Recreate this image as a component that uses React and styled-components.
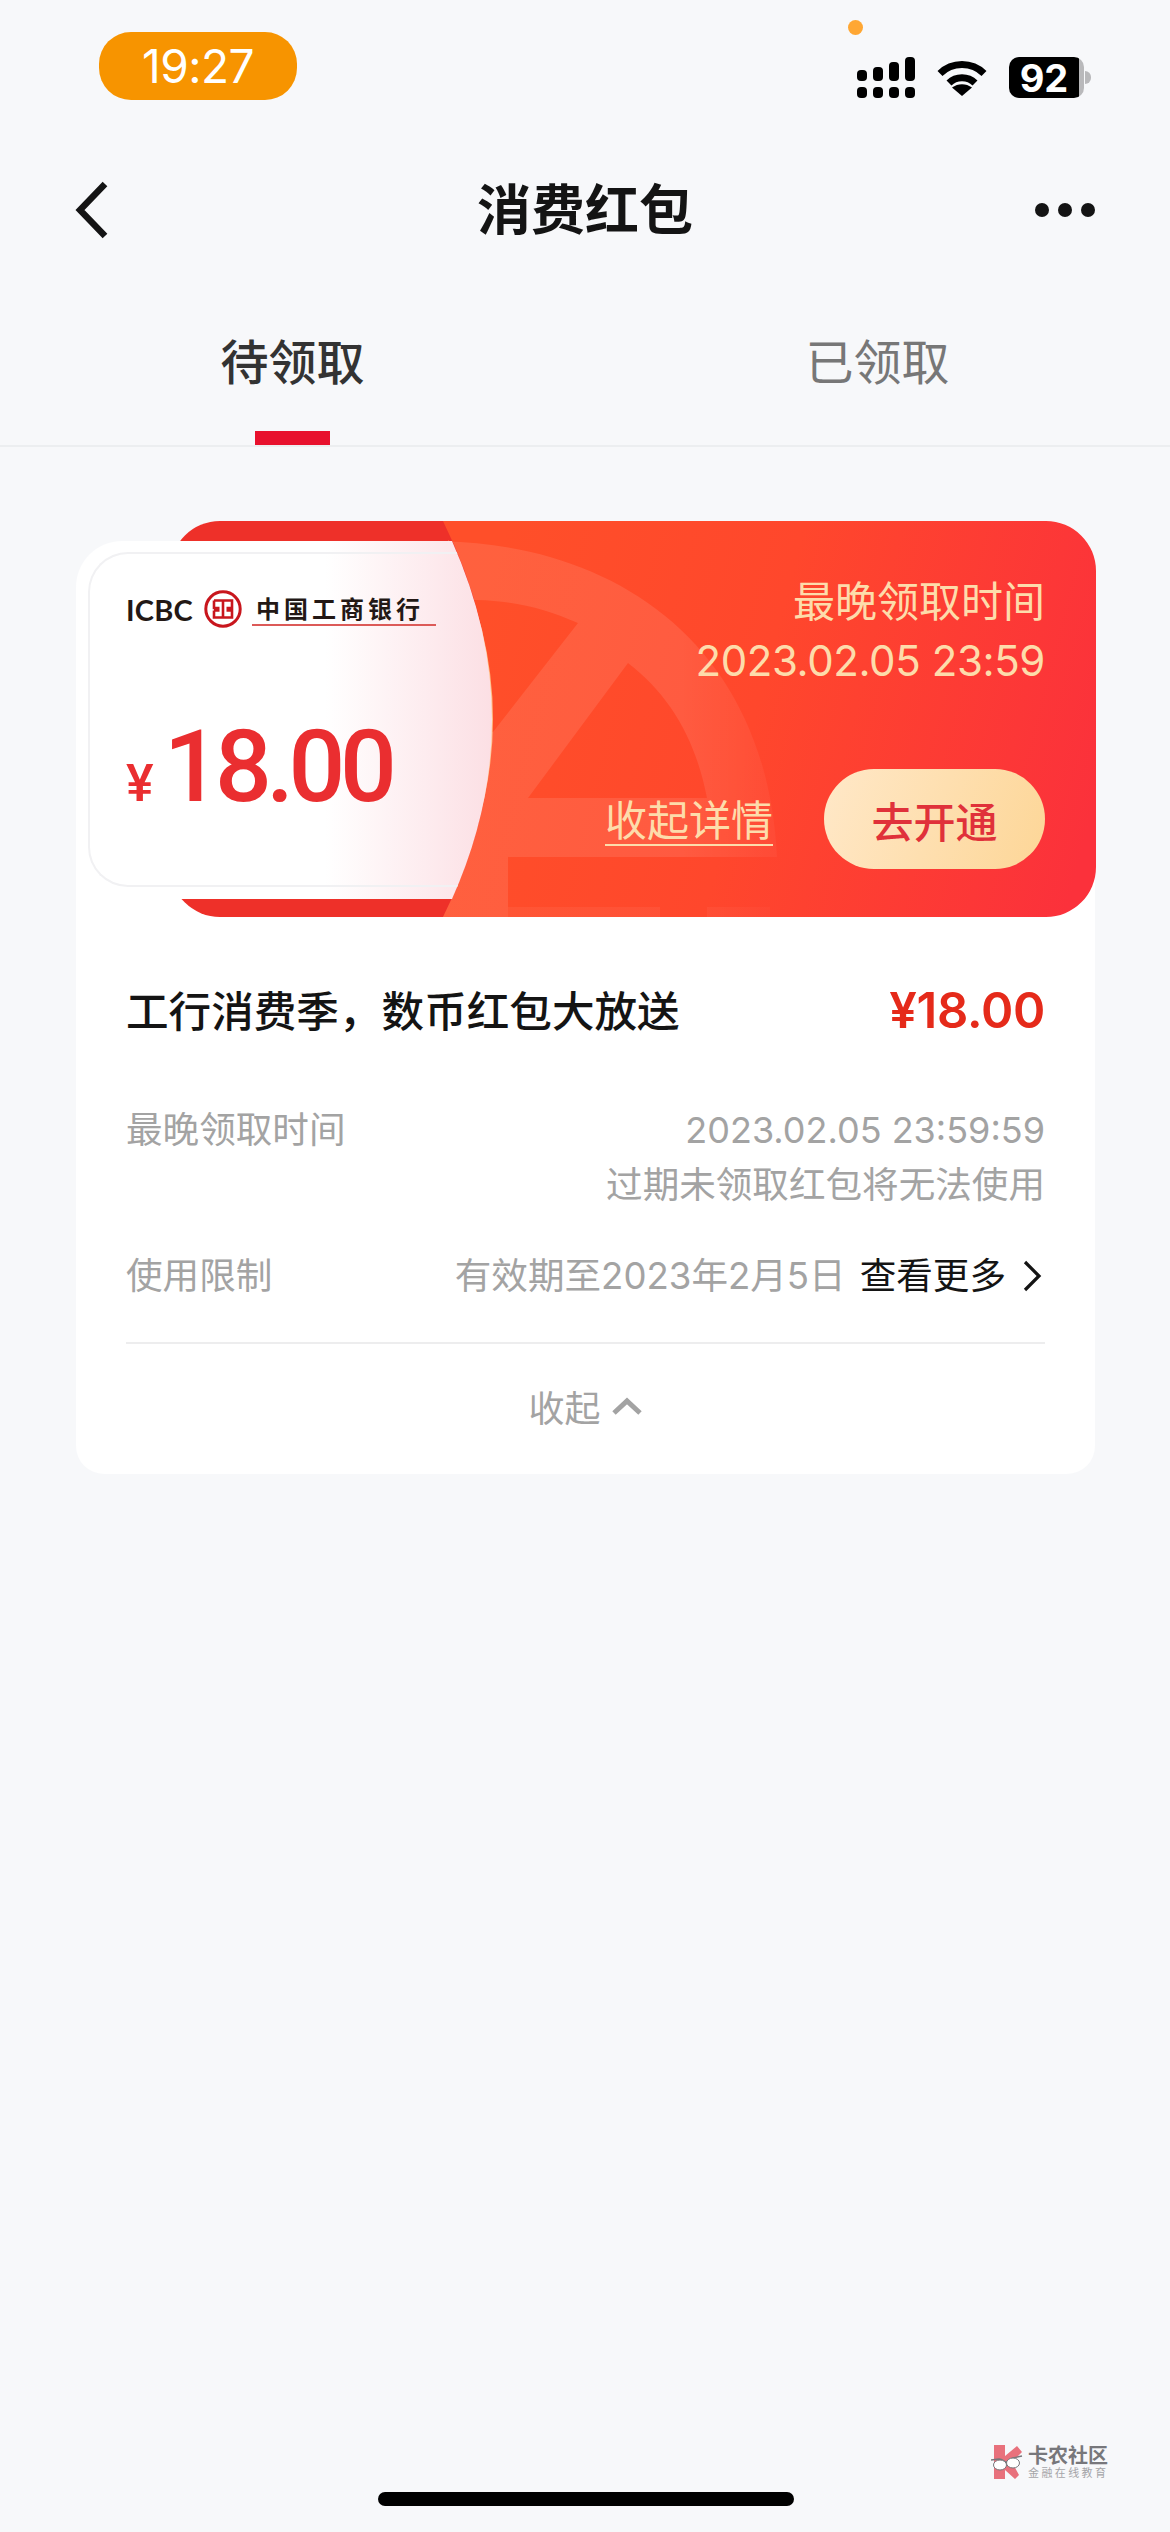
import React from 'react';
import styled, { createGlobalStyle } from 'styled-components';

const GlobalStyle = createGlobalStyle`
  html, body {
    margin: 0;
    padding: 0;
    background: #f7f8fa;
  }
  * {
    box-sizing: border-box;
  }
`;

const CJK = `"Noto Sans CJK SC", sans-serif`;
const NUM = `Inter, "Noto Sans CJK SC", sans-serif`;

const Page = styled.div`
  position: relative;
  width: 1170px;
  height: 2532px;
  overflow: hidden;
  background: #f7f8fa;
  font-family: ${CJK};
`;

const StatusBar = styled.div`
  position: relative;
  display: flex;
  justify-content: space-between;
  height: 160px;
  padding: 32px 79px 0 99px;
`;

const TimePill = styled.div`
  display: flex;
  align-items: center;
  justify-content: center;
  width: 198px;
  height: 68px;
  border-radius: 32px;
  background: #f79400;
  color: #fff;
  font-family: ${NUM};
  font-size: 46px;
  letter-spacing: -0.5px;
`;

const OrangeDot = styled.span`
  position: absolute;
  left: 848px;
  top: 20px;
  width: 15px;
  height: 15px;
  border-radius: 50%;
  background: #ffa733;
`;

const StatusIcons = styled.div`
  display: flex;
  align-items: center;
  gap: 22px;
  height: 41px;
  margin-top: 25px;
`;

const Battery = styled.div`
  position: relative;
  display: flex;
  align-items: center;
  justify-content: center;
  width: 75px;
  height: 41px;
  margin-right: 7px;
  padding-right: 5px;
  border-radius: 10px;
  background: linear-gradient(90deg, #000 93%, #b9b9bb 93%);
  color: #fff;
  font-family: ${NUM};
  font-size: 38px;
  font-weight: 700;

  &::after {
    content: '';
    position: absolute;
    right: -7px;
    top: 14px;
    width: 6px;
    height: 13px;
    border-radius: 0 6px 6px 0;
    background: #b9b9bb;
  }
`;

const NavBar = styled.div`
  display: grid;
  grid-template-columns: 1fr auto 1fr;
  align-items: center;
  height: 100px;
  padding: 0 75px;

  & > svg:last-child {
    justify-self: end;
  }
`;

const NavTitle = styled.div`
  color: #141414;
  font-size: 54px;
  font-weight: 700;
  line-height: 70px;
  margin-top: -6px;
`;

const Tabs = styled.div`
  display: flex;
  height: 187px;
  border-bottom: 2px solid #eceef0;
`;

const Tab = styled.div`
  flex: 1;
  display: flex;
  flex-direction: column;
  align-items: center;
  justify-content: flex-end;
  color: ${p => (p.$active ? '#333' : '#777')};
  font-size: 48px;
  font-weight: ${p => (p.$active ? 500 : 400)};
`;

const TabLabel = styled.div`
  line-height: 60px;
  margin-bottom: ${p => (p.$active ? '42px' : '56px')};
`;

const TabBar = styled.div`
  width: 75px;
  height: 14px;
  background: #e8112d;
`;

const Card = styled.div`
  margin: 74px 75px 0 76px;
  border-radius: 0 0 28px 28px;
  background: linear-gradient(transparent 100px, #fff 100px);
`;

const Banner = styled.div`
  position: relative;
  display: flex;
  justify-content: space-between;
  height: 396px;
`;

const BannerArt = styled.svg`
  position: absolute;
  left: 0;
  top: 0;
`;

const Coupon = styled.div`
  position: relative;
  width: 416px;
  height: 358px;
  margin-top: 20px;
  padding: 11px 0 12px 12px;
  background: linear-gradient(90deg, #fff 60%, #fcdfe4 100%);
  clip-path: path('M46 0H376Q456 179 376 358H46A46 46 0 0 1 0 312V46A46 46 0 0 1 46 0Z');
`;

const CouponFrame = styled.div`
  display: flex;
  flex-direction: column;
  height: 100%;
  padding: 36px 0 0 36px;
  border: 2px solid #f1f1f3;
  border-right: 0;
  border-radius: 40px 0 0 40px;
`;

const LogoRow = styled.div`
  display: flex;
  align-items: center;
  height: 38px;
`;

const LogoLatin = styled.span`
  width: 78px;
  color: #231815;
  font-family: Lato, sans-serif;
  font-size: 29px;
  font-weight: 700;
  letter-spacing: 0.2px;
`;

const LogoName = styled.span`
  margin-left: 10px;
  padding: 0 0 1px 4px;
  width: 184px;
  border-bottom: 2px solid #dc5a58;
  color: #231815;
  font-size: 24px;
  font-weight: 700;
  line-height: 31px;
  letter-spacing: 4px;
  white-space: nowrap;
`;

const Amount = styled.div`
  display: flex;
  align-items: baseline;
  margin-top: 89px;
  color: #ea2e30;
  font-family: Roboto, sans-serif;
  font-weight: 500;
`;

const AmountSign = styled.span`
  font-size: 52px;
  margin-right: 10px;
`;

const AmountValue = styled.span`
  font-size: 100px;
  line-height: 100px;
  letter-spacing: -5.5px;
`;

const BannerInfo = styled.div`
  position: relative;
  display: flex;
  flex-direction: column;
  align-items: flex-end;
  padding: 47px 50px 0 0;
  color: #fddcab;
  font-size: 42px;
`;

const InfoLabel = styled.div`
  line-height: 62px;
`;

const InfoTime = styled.div`
  font-family: ${NUM};
  font-size: 42px;
  line-height: 62px;
  letter-spacing: -0.4px;
`;

const BannerActions = styled.div`
  display: flex;
  align-items: center;
  gap: 51px;
  margin-top: 77px;
`;

const CollapseLink = styled.span`
  line-height: 52px;
  border-bottom: 2px solid #fddcab;
`;

const OpenButton = styled.div`
  display: flex;
  align-items: center;
  justify-content: center;
  width: 221px;
  height: 100px;
  border-radius: 50px;
  background: linear-gradient(110deg, #ffe8c8, #fdd697);
  color: #e0313a;
  font-weight: 500;
`;

const Details = styled.div`
  padding: 59px 50px 0;
`;

const DetailTitle = styled.div`
  display: flex;
  align-items: center;
  justify-content: space-between;
  height: 64px;
  color: #141414;
  font-size: 42.6px;
  font-weight: 500;
`;

const DetailPrice = styled.span`
  padding-top: 4px;
  color: #e52a1a;
  font-family: ${NUM};
  font-size: 49px;
  font-weight: 600;
  letter-spacing: -0.3px;
`;

const DetailRow = styled.div`
  display: flex;
  justify-content: space-between;
  margin-top: ${p => p.$top}px;
  color: #a3a3a3;
  font-family: ${NUM};
  font-size: 36.6px;
  line-height: 50px;
`;

const DetailValue = styled.div`
  display: flex;
  flex-direction: column;
  align-items: flex-end;
  gap: 5px;
`;

const DateText = styled.span`
  font-size: 36px;
`;

const ValueLine = styled.div`
  display: flex;
  align-items: center;
  padding-right: 3px;
`;

const MoreLink = styled.span`
  margin-left: 14px;
  color: #141414;
`;

const Divider = styled.div`
  margin-top: 41px;
  height: 2px;
  background: #ededee;
`;

const Collapse = styled.div`
  display: flex;
  align-items: center;
  justify-content: center;
  gap: 10px;
  height: 130px;
  padding-bottom: 6px;
  color: #a3a3a3;
  font-size: 36px;
`;

const Watermark = styled.div`
  position: absolute;
  left: 991px;
  top: 2444px;
  display: flex;
  gap: 5px;
`;

const WatermarkText = styled.div`
  display: flex;
  flex-direction: column;
  color: #77777b;
  font-size: 20px;
  font-weight: 700;
  line-height: 22px;
`;

const WatermarkSub = styled.span`
  color: #a5a5a8;
  font-size: 11px;
  font-weight: 400;
  line-height: 13px;
  letter-spacing: 2.4px;
  white-space: nowrap;
`;

const HomeIndicator = styled.div`
  position: absolute;
  left: 378px;
  top: 2492px;
  width: 416px;
  height: 14px;
  border-radius: 7px;
  background: #000;
`;

const SignalIcon = () => (
  <svg width="58" height="41" viewBox="0 0 58 41" fill="#000">
    <rect x="0" y="13" width="10" height="11" rx="4" />
    <rect x="16" y="10" width="10" height="14" rx="4" />
    <rect x="32" y="5" width="10" height="19" rx="4" />
    <rect x="48" y="0" width="10" height="24" rx="4" />
    <rect x="0" y="30" width="10" height="11" rx="4" />
    <rect x="16" y="30" width="10" height="11" rx="4" />
    <rect x="32" y="30" width="10" height="11" rx="4" />
    <rect x="48" y="30" width="10" height="11" rx="4" />
  </svg>
);

const WifiIcon = () => (
  <svg width="50" height="37" viewBox="0 0 50 37" fill="none" stroke="#000" strokeWidth="7">
    <path d="M3 14.5 C15 2.5 35 2.5 47 14.5" />
    <path d="M12 24 C19 17 31 17 38 24" />
    <path d="M25 37 L15 28.5 C21 24 29 24 35 28.5 Z" fill="#000" stroke="none" />
  </svg>
);

const BackIcon = () => (
  <svg width="34" height="58" viewBox="0 0 34 58" fill="none" stroke="#141414" strokeWidth="6.5">
    <path d="M30 3 L5 29 L30 55" />
  </svg>
);

const MoreIcon = () => (
  <svg width="60" height="14" viewBox="0 0 60 14" fill="#141414">
    <circle cx="7" cy="7" r="7" />
    <circle cx="30" cy="7" r="7" />
    <circle cx="53" cy="7" r="7" />
  </svg>
);

const IcbcMark = () => (
  <svg width="38" height="38" viewBox="0 0 38 38" fill="none" stroke="#c8161d">
    <circle cx="19" cy="19" r="17.2" strokeWidth="3" />
    <path d="M10 10.5H28V18H22.5M10 10.5V18H15.5M19 10.5V27.5M10 20.5H15.5M10 20.5V27.5H28V20.5H22.5" strokeWidth="2.6" />
  </svg>
);

const CardArt = () => (
  <BannerArt width="1020" height="396" viewBox="0 0 1020 396">
    <defs>
      <linearGradient id="bannerFill" gradientUnits="userSpaceOnUse" x1="400" y1="120" x2="1020" y2="280">
        <stop offset="0" stopColor="#ff4f29" />
        <stop offset="0.45" stopColor="#ff472c" />
        <stop offset="1" stopColor="#fb313b" />
      </linearGradient>
      <linearGradient id="markFade" gradientUnits="userSpaceOnUse" x1="360" y1="0" x2="710" y2="0">
        <stop offset="0" stopColor="#fff" stopOpacity="0.1" />
        <stop offset="0.7" stopColor="#fff" stopOpacity="0.1" />
        <stop offset="1" stopColor="#fff" stopOpacity="0.03" />
      </linearGradient>
      <clipPath id="bannerMain">
        <path d="M367 0H970A50 50 0 0 1 1020 50V346A50 50 0 0 1 970 396H367Q465 198 367 0Z" />
      </clipPath>
    </defs>
    <path d="M144 0H420V396H144A50 50 0 0 1 94 346V50A50 50 0 0 1 144 0Z" fill="#ee3029" />
    <path d="M367 0H970A50 50 0 0 1 1020 50V346A50 50 0 0 1 970 396H367Q465 198 367 0Z" fill="url(#bannerFill)" />
    <path d="M372 20Q460 198 372 376" fill="none" stroke="#ffbb80" strokeWidth="2" />
    <g clipPath="url(#bannerMain)" fill="url(#markFade)" fillRule="evenodd">
      <path d="M340 21C520 13 690 110 701 336H432V396H340ZM401 79L350 79V211H417L502 102C470 88 440 80 401 79ZM552 142L452 277H631C620 220 595 175 552 142Z" />
      <rect x="432" y="386" width="152" height="10" fillOpacity="0.5" />
      <rect x="631" y="386" width="63" height="10" fillOpacity="0.5" />
    </g>
  </BannerArt>
);

const WatermarkLogo = () => (
  <svg width="32" height="36" viewBox="0 0 32 36">
    <path d="M3 1H14V12L26 2L31 8L21 18L28 31L24 35L14 26V35H3Z" fill="#e8717c" />
    <path d="M0 16L8 15C12 15 13 18 15 18C17 18 18 15 22 14L31 12" fill="none" stroke="#77777b" strokeWidth="1.4" />
    <ellipse cx="9" cy="21" rx="6.5" ry="5" fill="#fff" stroke="#77777b" strokeWidth="1" />
    <ellipse cx="22" cy="19" rx="6.5" ry="5" fill="#fff" stroke="#77777b" strokeWidth="1" />
  </svg>
);

const App = () => (
  <Page>
    <GlobalStyle />
    <StatusBar>
      <TimePill>19:27</TimePill>
      <OrangeDot />
      <StatusIcons>
        <SignalIcon />
        <WifiIcon />
        <Battery>92</Battery>
      </StatusIcons>
    </StatusBar>
    <NavBar>
      <BackIcon />
      <NavTitle>消费红包</NavTitle>
      <MoreIcon />
    </NavBar>
    <Tabs>
      <Tab $active>
        <TabLabel $active>待领取</TabLabel>
        <TabBar />
      </Tab>
      <Tab>
        <TabLabel>已领取</TabLabel>
      </Tab>
    </Tabs>
    <Card>
      <Banner>
        <CardArt />
        <Coupon>
          <CouponFrame>
            <LogoRow>
              <LogoLatin>ICBC</LogoLatin>
              <IcbcMark />
              <LogoName>中国工商银行</LogoName>
            </LogoRow>
            <Amount>
              <AmountSign>¥</AmountSign>
              <AmountValue>18.00</AmountValue>
            </Amount>
          </CouponFrame>
        </Coupon>
        <BannerInfo>
          <InfoLabel>最晚领取时间</InfoLabel>
          <InfoTime>2023.02.05 23:59</InfoTime>
          <BannerActions>
            <CollapseLink>收起详情</CollapseLink>
            <OpenButton>去开通</OpenButton>
          </BannerActions>
        </BannerInfo>
      </Banner>
      <Details>
        <DetailTitle>
          <span>工行消费季，数币红包大放送</span>
          <DetailPrice>¥18.00</DetailPrice>
        </DetailTitle>
        <DetailRow $top={65}>
          <span>最晚领取时间</span>
          <DetailValue>
            <DateText>2023.02.05 23:59:59</DateText>
            <span>过期未领取红包将无法使用</span>
          </DetailValue>
        </DetailRow>
        <DetailRow $top={41}>
          <span>使用限制</span>
          <ValueLine>
            <span>有效期至2023年2月5日</span>
            <MoreLink>查看更多</MoreLink>
            <svg width="20" height="34" viewBox="0 0 20 34" fill="none" stroke="#141414" strokeWidth="3.2" style={{ marginLeft: 16 }}>
              <path d="M3 3L17 17L3 31" />
            </svg>
          </ValueLine>
        </DetailRow>
        <Divider />
        <Collapse>
          <span>收起</span>
          <svg width="32" height="18" viewBox="0 0 32 18" fill="none" stroke="#a3a3a3" strokeWidth="5">
            <path d="M3 16L16 4L29 16" />
          </svg>
        </Collapse>
      </Details>
    </Card>
    <Watermark>
      <WatermarkLogo />
      <WatermarkText>
        卡农社区
        <WatermarkSub>金融在线教育</WatermarkSub>
      </WatermarkText>
    </Watermark>
    <HomeIndicator />
  </Page>
);

export default App;
